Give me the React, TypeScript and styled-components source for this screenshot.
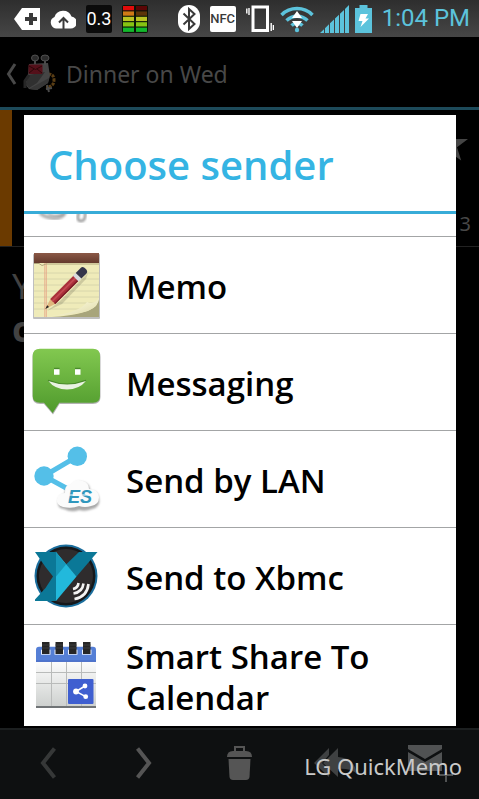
import React from "react";
import styled, { createGlobalStyle, css } from "styled-components";

const GlobalStyle = createGlobalStyle`
  * { box-sizing: border-box; }
  html, body { margin: 0; background: #000; }
  body { font-family: "Noto Sans", "Open Sans", sans-serif; }
  button { font: inherit; color: inherit; background: none; border: 0; padding: 0; }
  svg { display: block; flex: none; }
`;

const Screen = styled.div`
  min-height: 100vh;
  display: flex;
  flex-direction: column;
  background: #000;
  overflow: hidden;
`;

/* Status bar */

const StatusBar = styled.header`
  height: 37px;
  flex: none;
  display: flex;
  align-items: center;
  justify-content: space-between;
  padding: 0 9px 0 14px;
  background: linear-gradient(#2e2e2e, #464646);
`;

const StatusGroup = styled.div<{ $gap: number }>`
  display: flex;
  align-items: center;
  gap: ${(p) => p.$gap}px;
`;

const Badge = styled.span<{ $light?: boolean }>`
  display: flex;
  align-items: center;
  justify-content: center;
  width: 26px;
  height: ${(p) => (p.$light ? 26 : 28)}px;
  border-radius: 2px;
  ${(p) =>
    p.$light
      ? css`
          background: #fff;
          color: #3a3a3a;
          font: 500 13px/26px "Roboto", sans-serif;
        `
      : css`
          background: #0b0b0b;
          color: #fff;
          font: 400 18px/28px "Roboto", sans-serif;
        `}
`;

const Clock = styled.time`
  margin-left: 4px;
  color: #5cc3dc;
  font: 400 24px/37px "Roboto", sans-serif;
  white-space: nowrap;
`;

/* Action bar */

const ActionBar = styled.div`
  height: 73px;
  flex: none;
  display: flex;
  align-items: center;
  padding-top: 4px;
  border-bottom: 3px solid #1d4a5a;
`;

const BackButton = styled.button`
  display: flex;
  align-items: center;
  gap: 6px;
  padding-left: 5px;
`;

const ScreenTitle = styled.h1`
  margin: 0 0 0 9px;
  font-size: 23px;
  line-height: 32px;
  font-weight: 400;
  color: #484848;
`;

/* Message behind the dialog */

const Content = styled.main`
  position: relative;
  flex: 1;
  min-height: 618px;
`;

const MessageHeader = styled.section`
  height: 137px;
  display: flex;
  justify-content: space-between;
  border-bottom: 1px solid #222;
`;

const AccountStripe = styled.div`
  width: 12px;
  background: #6b3a00;
`;

const MessageMeta = styled.div`
  display: flex;
  flex-direction: column;
  align-items: flex-end;
  justify-content: space-between;
  padding: 16px 8px 6px 0;
  font-size: 20px;
  line-height: 32px;
  color: #484848;
`;

const MessageBody = styled.p<{ $strong?: boolean }>`
  margin: 0;
  padding: 0 12px;
  font-size: 35px;
  line-height: 43px;
  font-weight: ${(p) => (p.$strong ? 700 : 400)};
  color: #424242;
  &:first-of-type { margin-top: 17px; }
`;

/* Dialog */

const Dialog = styled.div`
  position: absolute;
  inset: 5px 23px 2px 24px;
  display: flex;
  flex-direction: column;
  background: #fff;
`;

const DialogTitle = styled.h2`
  flex: none;
  margin: 0;
  height: 99px;
  padding: 0 24px;
  border-bottom: 3px solid #38acd8;
  color: #35b4e3;
  font: 600 40px/100px "Open Sans", "Noto Sans", sans-serif;
  white-space: nowrap;
`;

const SenderList = styled.ul`
  flex: 1;
  min-height: 0;
  margin: 0;
  padding: 0;
  list-style: none;
  overflow: hidden;
  display: flex;
  flex-direction: column;
  justify-content: flex-end;
`;

const SenderItem = styled.li`
  flex: none;
  border-bottom: 1px solid #a3a5a6;
  &:last-child { border-bottom: 0; }
`;

const SenderButton = styled.button`
  width: 100%;
  min-height: 96px;
  display: flex;
  align-items: center;
  gap: 22px;
  padding: 7px 24px 8px 6px;
  text-align: left;
  color: #000;
  font: 600 33px/41px "Open Sans", "Noto Sans", sans-serif;
`;

const SenderName = styled.span`
  padding: 4px 0 0 2px;
`;

/* Bottom toolbar */

const Toolbar = styled.footer`
  position: relative;
  height: 71px;
  flex: none;
  display: grid;
  grid-template-columns: repeat(5, 1fr);
  padding-bottom: 3px;
  background: #0e1011;
  border-top: 2px solid #1c1f20;
`;

const ToolButton = styled.button`
  display: flex;
  align-items: center;
  justify-content: center;
`;

const Caption = styled.span`
  position: absolute;
  right: 17px;
  top: 20px;
  font-size: 22px;
  line-height: 32px;
  color: #c9c9c9;
  white-space: nowrap;
`;

/* Status icons */

const TagIcon = () => (
  <svg width="26" height="22" viewBox="0 0 26 22">
    <path d="M8 0H26V22H8L0 11Z" fill="#fff" />
    <path d="M17 5v12M11 11h12" stroke="#3a3a3a" strokeWidth="4" />
  </svg>
);

const CloudUpIcon = () => (
  <svg width="26" height="20" viewBox="0 0 26 20">
    <path d="M6 19.500A6 6 0 0 1 4.500 8A9 9 0 0 1 21.500 7.500A6 6 0 0 1 20 19.500Z" fill="#fff" />
    <path d="M13.500 20V9M9 13.500L13.500 9L18 13.500" fill="none" stroke="#3a3a3a" strokeWidth="2" />
  </svg>
);

const eqColors = ["#e00b0b", "#d07a16", "#b9c322", "#86c412", "#12b82c"];
const eqDim = ["#5a0606", "#5c3408", "#b9c322", "#86c412", "#12b82c"];

const EqualizerIcon = () => (
  <svg width="26" height="28" viewBox="0 0 26 28">
    <rect width="26" height="28" rx="2" fill="#0b1408" />
    {eqColors.map((c, i) => (
      <g key={c}>
        <rect x="1" y={1 + i * 5.400} width="11" height="4.300" fill={c} />
        <rect x="14" y={1 + i * 5.400} width="11" height="4.300" fill={eqDim[i]} />
      </g>
    ))}
  </svg>
);

const BluetoothIcon = () => (
  <svg width="22" height="28" viewBox="0 0 22 28">
    <rect width="22" height="28" rx="11" fill="#fff" />
    <path d="M5.500 8.500L16.500 19L11 24V4L16.500 9L5.500 19.500" fill="none" stroke="#3a3a3a" strokeWidth="2" />
  </svg>
);

const VibrateIcon = () => (
  <svg width="28" height="28" viewBox="0 0 28 28">
    <rect x="7" y="2" width="14.500" height="23.500" fill="none" stroke="#fff" strokeWidth="3" />
    <path d="M.8 3.500v5M3 3v7M25.200 18v8M27.400 20v5" stroke="#fff" strokeWidth="1.400" />
  </svg>
);

const WifiIcon = () => (
  <svg width="34" height="28" viewBox="0 0 34 28">
    <g fill="none" stroke="#5cc3dc" strokeWidth="3.500">
      <path d="M1.500 10A22 22 0 0 1 32.500 10" />
      <path d="M6.500 15.500A15 15 0 0 1 27.500 15.500" />
      <path d="M11.500 20.500A8 8 0 0 1 22.500 20.500" />
    </g>
    <circle cx="17" cy="25" r="2.200" fill="#5cc3dc" />
    <path d="M12 13L17 6L22 13ZM12 16H22L17 23Z" fill="#fff" />
  </svg>
);

const SignalIcon = () => (
  <svg width="29" height="28" viewBox="0 0 29 28">
    <path d="M0 28L4 24.200V28ZM5 28V23.200L9 19.300V28ZM10 28V18.300L14 14.500V28ZM15 28V13.500L19 9.700V28ZM20 28V8.700L24 4.900V28ZM25 28V4L29 0V28Z" fill="#5cc3dc" />
  </svg>
);

const BatteryIcon = () => (
  <svg width="17" height="28" viewBox="0 0 17 28">
    <path d="M4.500 0h8v3H17V28H0V3H4.500Z" fill="#5cc3dc" />
    <path d="M5.500 9H13L10.500 13.500H14L5.500 22L7.500 16H3.500Z" fill="#fff" />
  </svg>
);

/* Action bar icons */

const BackIcon = () => (
  <svg width="12" height="22" viewBox="0 0 12 22">
    <path d="M10 1L3.500 11L10 21" fill="none" stroke="#494949" strokeWidth="3" />
  </svg>
);

const RobotIcon = () => (
  <svg width="34" height="40" viewBox="0 0 34 40">
    <path d="M25 20Q31 20 31 26Q31 33 23 33" fill="none" stroke="#5a3e15" strokeWidth="3" strokeDasharray="3 1" />
    <path d="M24 31L26 38M29 34L23 35" stroke="#4a4a4a" strokeWidth="2" />
    <path d="M6 10L25 9L27 22L25 29L14 36L6 35L2 30L5 21Z" fill="#454545" />
    <path d="M6 21L22 18L14 29L6 34L3 30Z" fill="#303030" />
    <path d="M2 34V27L6 21" fill="none" stroke="#262626" strokeWidth="3" />
    <path d="M6 35L14 36L25 29L26 24Z" fill="#373737" />
    <ellipse cx="12" cy="4" rx="3.500" ry="3" fill="#2b2b2b" stroke="#505050" />
    <ellipse cx="22" cy="4" rx="4" ry="3" fill="#2b2b2b" stroke="#505050" />
    <path d="M12 7V11M22 7V11" stroke="#4a4a4a" strokeWidth="2" />
    <rect x="5.500" y="10.500" width="14" height="9.500" rx="1" fill="#54101a" />
    <path d="M6 12L12.500 15.500L19 12M6 19L11 15M19 19L14 15" fill="none" stroke="#2b0809" />
  </svg>
);

const StarIcon = () => (
  <svg width="39" height="36" viewBox="0 0 39 36">
    <path d="M18 0L22.300 13H36L25 21.300L29.200 34.500L18 26.500L6.800 34.500L11 21.300L0 13H13.700Z" fill="#454545" />
  </svg>
);

/* Sender icons, all on a 72px square */

const SenderSvg = ({ children }: { children: React.ReactNode }) => (
  <svg width="72" height="72" viewBox="0 0 72 72" aria-hidden="true">
    {children}
  </svg>
);

const ShareShadowIcon = () => (
  <SenderSvg>
    <defs>
      <filter id="soft" x="-20%" y="-20%" width="140%" height="140%">
        <feGaussianBlur stdDeviation="1.300" />
      </filter>
    </defs>
    <path d="M10 61Q16 66 24 66Q33 66 35 60" fill="none" stroke="#b4b4b4" strokeWidth="4" filter="url(#soft)" />
    <path d="M18 62Q26 66 34 62" fill="none" stroke="#999" strokeWidth="1.500" filter="url(#soft)" />
    <path d="M49 60Q46 69 51 69Q56 69 55 60" fill="none" stroke="#999" strokeWidth="2.500" filter="url(#soft)" />
  </SenderSvg>
);

const MemoIcon = () => (
  <SenderSvg>
    <defs>
      <linearGradient id="curl" x1="0" y1="0" x2="1" y2="1">
        <stop offset="0.400" stopColor="#f6f3d0" />
        <stop offset="1" stopColor="#dcd8aa" />
      </linearGradient>
      <linearGradient id="band" x1="0" y1="0" x2="0" y2="1">
        <stop offset="0" stopColor="#8b5947" />
        <stop offset="1" stopColor="#643a2c" />
      </linearGradient>
    </defs>
    <rect x="3" y="5" width="67" height="65" rx="1" fill="#000" opacity="0.250" />
    <rect x="4" y="5" width="65" height="63" fill="#efebb9" />
    <path d="M4 24h65M4 30h65M4 36h65M4 42h65M4 48h65M4 54h64M4 60h55" stroke="#d8d6ab" strokeWidth="1" />
    <path d="M14.800 14V68M16.300 14V68" stroke="#e6a184" strokeWidth="0.800" />
    <path d="M22 68Q56 66 66 57L69 50V68Z" fill="#a8a57b" />
    <path d="M22 67Q50 63 57 53Q64 56 69 49Q69 57 58 62Q44 66 22 67Z" fill="url(#curl)" />
    <rect x="4" y="4" width="65" height="10" fill="url(#band)" />
    <path d="M4 14.500H9L12 16.500L16 15H69" fill="none" stroke="#b0a77d" />
    <path d="M17 62L30 52L58 24L56 30L32 55Z" fill="#000" opacity="0.140" />
    <g transform="translate(15.300 60) rotate(-45)">
      <path d="M0 0L11 -3.500V3.500Z" fill="#dfb67d" />
      <path d="M0 0L4 -1.300V1.300Z" fill="#222" />
      <rect x="10.500" y="-3.600" width="34" height="7.200" fill="#a92f3a" />
      <rect x="10.500" y="-1.600" width="34" height="2" fill="#c24a52" />
      <rect x="10.500" y="2.200" width="34" height="1.400" fill="#7b1c28" />
      <rect x="43" y="-4" width="4" height="8" fill="#d8dade" />
      <path d="M47 -4H54Q57 -4 57 0Q57 4 54 4H47Z" fill="#33344a" />
    </g>
  </SenderSvg>
);

const MessagingIcon = () => (
  <SenderSvg>
    <defs>
      <linearGradient id="bubble" x1="0" y1="0" x2="0" y2="1">
        <stop offset="0" stopColor="#82c850" />
        <stop offset="1" stopColor="#4f9a2c" />
      </linearGradient>
    </defs>
    <path d="M10 3.500H63Q70.500 3.500 70.500 11V51Q70.500 58 63 58H29.500L23 68.500L14 58H10Q2.500 58 2.500 51V11Q2.500 3.500 10 3.500Z" fill="#000" opacity="0.300" />
    <path d="M10 2.700H63Q70 2.700 70 10V50Q70 56.700 63 56.700H29.300L22.700 67L14 56.700H10Q2.700 56.700 2.700 50V10Q2.700 2.700 10 2.700Z" fill="url(#bubble)" />
    <path d="M24 22.500h5.500M45 22.500h5.500" fill="none" stroke="#4a8b2b" strokeWidth="1.500" />
    <path d="M24 23.200h5.500v5.500h-5.500ZM45 23.200h5.500v5.500h-5.500Z" fill="#fff" />
    <path d="M18 34.500Q37 42 56 34.500" fill="none" stroke="#4a8b2b" strokeWidth="1.500" />
    <path d="M18.300 35Q37 42 56 35Q49 43.500 37 43.500Q25 43.500 18.300 35Z" fill="#e9f2e2" />
  </SenderSvg>
);

const LanIcon = () => (
  <SenderSvg>
    <path d="M47.300 13.300L14 33L38 46" fill="none" stroke="#54bfe8" strokeWidth="5" />
    <circle cx="47.300" cy="13.300" r="9.700" fill="#54bfe8" />
    <circle cx="14" cy="33" r="9.700" fill="#54bfe8" />
    <path d="M34 66Q27 65 28 58Q29 52 35 51Q34 43 42 43Q45 37 53 39Q60 41 60 47Q68 48 69 55Q71 64 62 66Q55 69 49 67Q42 70 34 66Z" fill="#a8a8a8" filter="url(#soft)" />
    <path d="M33 64Q26 62 27 56Q28 50 35 50Q34 42 41 41Q45 35 53 38Q59 40 59 46Q68 46 69 54Q69 62 61 63Q55 65 49 63Q42 66 33 64Z" fill="#fbfbfb" />
    <text x="38" y="60" fontFamily="Liberation Sans, sans-serif" fontWeight="700" fontStyle="italic" fontSize="18" fill="#2f97bd">ES</text>
    <path d="M38 52H60" stroke="#fbfbfb" strokeWidth="1" />
  </SenderSvg>
);

const XbmcIcon = () => (
  <SenderSvg>
    <circle cx="36" cy="36" r="31.500" fill="#1b6e9d" />
    <circle cx="36" cy="36" r="29.500" fill="#16181a" />
    <circle cx="36" cy="36" r="27" fill="#2f2c2d" />
    <path d="M5 12H26V61H5V59.500L15.500 48L23 36.500L15.500 27Z" fill="#0b7897" />
    <path d="M49 12H67.500L46.500 36.500L36 24.500Z" fill="#0b7897" />
    <path d="M26 12L46.500 36.500L26 61Z" fill="#22b9dc" />
    <path d="M26 12L36 24.500L26 36.500Z" fill="#1797b8" />
    <g fill="none" stroke="#f4f4f4" strokeWidth="2.600">
      <path d="M48.500 43Q48 48 43 49" />
      <path d="M53.500 43.500Q52.500 52 43.500 53.500" />
      <path d="M58.500 44Q57 57 44.500 59" />
    </g>
  </SenderSvg>
);

const CalendarIcon = () => (
  <SenderSvg>
    <defs>
      <linearGradient id="page" x1="0" y1="0" x2="0" y2="1">
        <stop offset="0" stopColor="#fff" />
        <stop offset="1" stopColor="#cdd0ce" />
      </linearGradient>
    </defs>
    <rect x="6" y="20" width="60" height="48" fill="url(#page)" />
    <path d="M6 33.500H66M6 44.500H66M21.500 23V67M36.500 23V67M51.500 23V67" stroke="#b9bbba" />
    <rect x="6" y="67" width="60" height="2" fill="#707476" />
    <path d="M6 22.700V11Q6 7.700 9 7.700H63Q66 7.700 66 11V22.700Z" fill="#557fd6" />
    <path d="M6 22.200H66" stroke="#3d61c0" />
    {[12, 25.500, 39, 53].map((x) => (
      <g key={x}>
        <rect x={x - 1} y="10.700" width="9.500" height="5" fill="#e8effc" />
        <rect x={x} y="3" width="7.500" height="12" fill="#262626" />
        <path d={`M${x} 6h7.500M${x} 9h7.500`} stroke="#3d3d3d" />
      </g>
    ))}
    <rect x="38" y="40" width="25.500" height="25" rx="1" fill="#3f5fd0" />
    <path d="M55 47L46 52.500L55.700 57.700" fill="none" stroke="#fff" strokeWidth="1.500" />
    <circle cx="46" cy="52.500" r="2.900" fill="#fff" />
    <circle cx="55" cy="47" r="2.400" fill="#fff" />
    <circle cx="55.700" cy="57.700" r="2.400" fill="#fff" />
  </SenderSvg>
);

/* Toolbar icons */

const ChevronIcon = ({ next }: { next?: boolean }) => (
  <svg width="16" height="32" viewBox="0 0 16 32">
    <path
      d={next ? "M1.500 1.500L13 16L1.500 30.500" : "M14.500 1.500L3 16L14.500 30.500"}
      fill="none"
      stroke={next ? "#555" : "#363838"}
      strokeWidth="4"
    />
  </svg>
);

const TrashIcon = () => (
  <svg width="25" height="34" viewBox="0 0 25 34">
    <path d="M8 5V1H17V5" fill="none" stroke="#555" strokeWidth="2" />
    <path d="M0 11Q0 5 6 5H19Q25 5 25 11Z" fill="#555" />
    <path d="M1.500 13H23.500L22.500 31Q22 34 19 34H6Q3 34 2.500 31Z" fill="#555" />
  </svg>
);

const ReplyAllIcon = () => (
  <svg width="42" height="34" viewBox="0 0 42 34">
    <path d="M15 2V9L8 17L15 24V31L0 17Z" fill="#3f4142" />
    <path d="M24 2V11Q41 12 42 27Q35 22 24 23V31L9 17Z" fill="#3f4142" />
  </svg>
);

const MailAddIcon = () => (
  <svg width="46" height="38" viewBox="0 0 46 38">
    <path d="M0 1H34V5L17 15L0 5Z" fill="#505253" />
    <path d="M0 8L17 18L34 8V27H0Z" fill="#505253" />
    <path d="M38 25V38M31 31H45" stroke="#505253" strokeWidth="2" />
  </svg>
);

const senders = [
  { name: "", label: "Share", Icon: ShareShadowIcon },
  { name: "Memo", Icon: MemoIcon },
  { name: "Messaging", Icon: MessagingIcon },
  { name: "Send by LAN", Icon: LanIcon },
  { name: "Send to Xbmc", Icon: XbmcIcon },
  { name: "Smart Share To Calendar", Icon: CalendarIcon },
];

export default function App() {
  return (
    <Screen>
      <GlobalStyle />
      <StatusBar>
        <StatusGroup $gap={10}>
          <TagIcon />
          <CloudUpIcon />
          <Badge>0.3</Badge>
          <EqualizerIcon />
        </StatusGroup>
        <StatusGroup $gap={6}>
          <StatusGroup $gap={10}>
            <BluetoothIcon />
            <Badge $light>NFC</Badge>
            <VibrateIcon />
          </StatusGroup>
          <WifiIcon />
          <SignalIcon />
          <BatteryIcon />
          <Clock>1:04 PM</Clock>
        </StatusGroup>
      </StatusBar>

      <ActionBar>
        <BackButton aria-label="Back">
          <BackIcon />
          <RobotIcon />
        </BackButton>
        <ScreenTitle>Dinner on Wed</ScreenTitle>
      </ActionBar>

      <Content>
        <MessageHeader>
          <AccountStripe />
          <MessageMeta>
            <StarIcon />
            <span>3</span>
          </MessageMeta>
        </MessageHeader>
        <MessageBody>Y</MessageBody>
        <MessageBody $strong>c</MessageBody>

        <Dialog role="dialog" aria-labelledby="dialog-title">
          <DialogTitle id="dialog-title">Choose sender</DialogTitle>
          <SenderList>
            {senders.map(({ name, label, Icon }) => (
              <SenderItem key={name}>
                <SenderButton aria-label={label}>
                  <Icon />
                  {name && <SenderName>{name}</SenderName>}
                </SenderButton>
              </SenderItem>
            ))}
          </SenderList>
        </Dialog>
      </Content>

      <Toolbar>
        <ToolButton aria-label="Previous"><ChevronIcon /></ToolButton>
        <ToolButton aria-label="Next"><ChevronIcon next /></ToolButton>
        <ToolButton aria-label="Delete"><TrashIcon /></ToolButton>
        <ToolButton aria-label="Reply all"><ReplyAllIcon /></ToolButton>
        <ToolButton aria-label="Mark unread"><MailAddIcon /></ToolButton>
        <Caption>LG QuickMemo</Caption>
      </Toolbar>
    </Screen>
  );
}
